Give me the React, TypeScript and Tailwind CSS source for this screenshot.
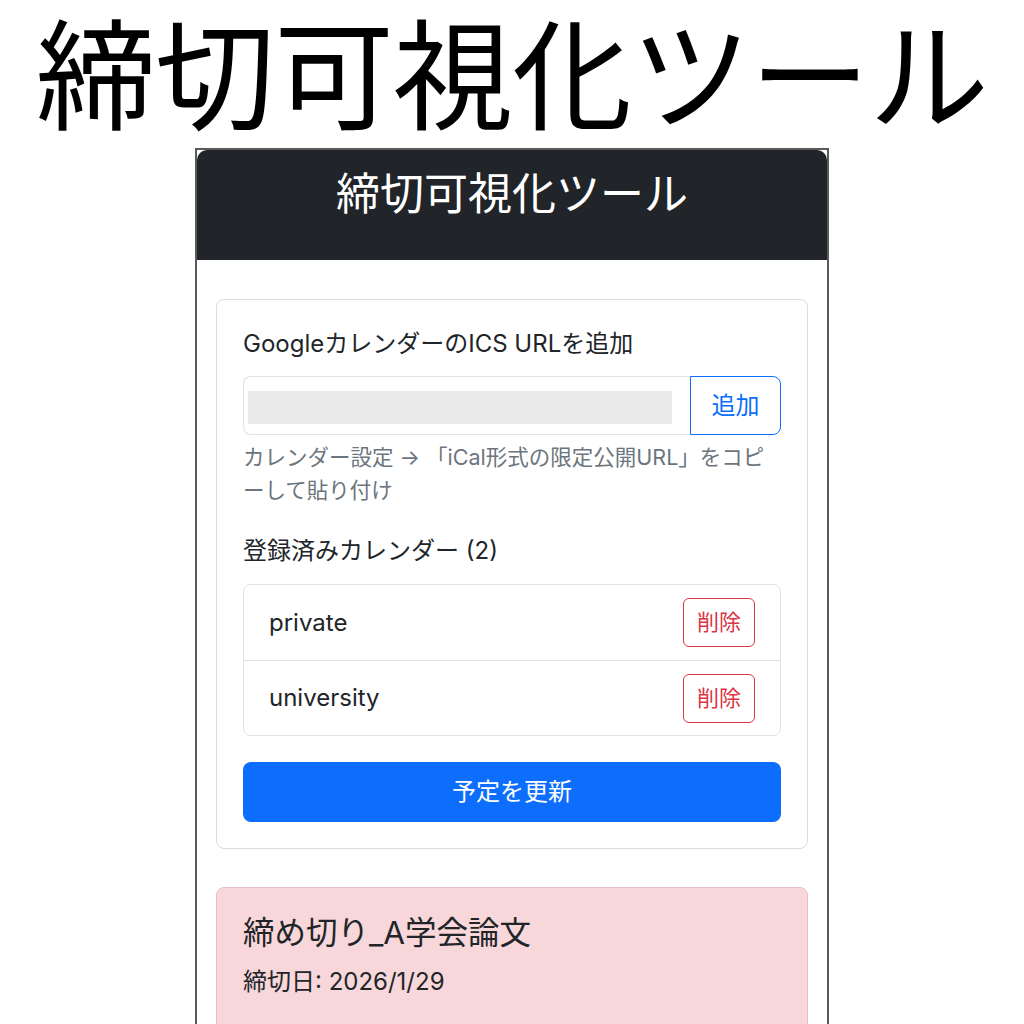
const font = { fontFamily: 'Inter, "Noto Sans CJK JP", sans-serif' };

const calendars = ['private', 'university'];

export default function App() {
  return (
    <div className="bg-white min-h-[1024px] h-[1024px] overflow-hidden text-[#212529]" style={font}>
      <div className="h-[148px] pt-[8px]">
        <h1 className="text-center text-[120px] leading-[140px] text-black font-normal tracking-[-1px] whitespace-nowrap">
          締切可視化ツール
        </h1>
      </div>

      <div className="w-[634px] mx-auto border-x-2 border-t-2 border-[#5a5a5a] h-[900px]">
        <header className="bg-[#212529] rounded-t-[10px] pt-[17px] pb-[39px]">
          <h2 className="text-center text-white text-[44px] leading-[54px] font-normal">締切可視化ツール</h2>
        </header>

        <main className="px-[19px] pt-[39px] flex flex-col gap-[38px]">
          <section className="border border-[#dcdcdc] rounded-[8px] p-[26px]">
            <label className="block text-[24px] leading-[36px] mb-[14px]">GoogleカレンダーのICS URLを追加</label>

            <div className="flex h-[59px]">
              <div className="flex-1 border border-r-0 border-[#dee2e6] rounded-l-[8px] pl-[4px] pr-[18px] pt-[14px] pb-[10px]">
                <div className="h-full bg-[#e9e9e9]" />
              </div>
              <button className="w-[91px] border border-[#0d6efd] rounded-r-[8px] text-[#0d6efd] text-[24px]">追加</button>
            </div>

            <p className="mt-[6px] text-[21.5px] leading-[33px] text-[#6c757d]">
              カレンダー設定 → 「iCal形式の限定公開URL」をコピーして貼り付け
            </p>

            <h3 className="mt-[26px] mb-[15px] text-[24px] leading-[36px] font-normal">登録済みカレンダー (2)</h3>

            <ul className="border border-[#dee2e6] rounded-[8px]">
              {calendars.map((name, i) => (
                <li
                  key={name}
                  className={`flex items-center justify-between h-[75px] pl-[25px] pr-[25px] ${i > 0 ? 'border-t border-[#dee2e6]' : ''}`}
                >
                  <span className="text-[24px]">{name}</span>
                  <button className="w-[72px] h-[49px] border border-[#dc3545] rounded-[6px] text-[#dc3545] text-[22px]">削除</button>
                </li>
              ))}
            </ul>

            <button className="mt-[26px] w-full h-[60px] bg-[#0d6efd] rounded-[8px] text-white text-[24px]">予定を更新</button>
          </section>

          <section className="border border-[#e6bfc4] bg-[#f8d7da] rounded-[8px] p-[26px] h-[200px]">
            <h4 className="text-[31.5px] leading-[38px] font-normal mb-[12px]">締め切り_A学会論文</h4>
            <p className="text-[24px] leading-[36px]">締切日: 2026/1/29</p>
          </section>
        </main>
      </div>
    </div>
  );
}
